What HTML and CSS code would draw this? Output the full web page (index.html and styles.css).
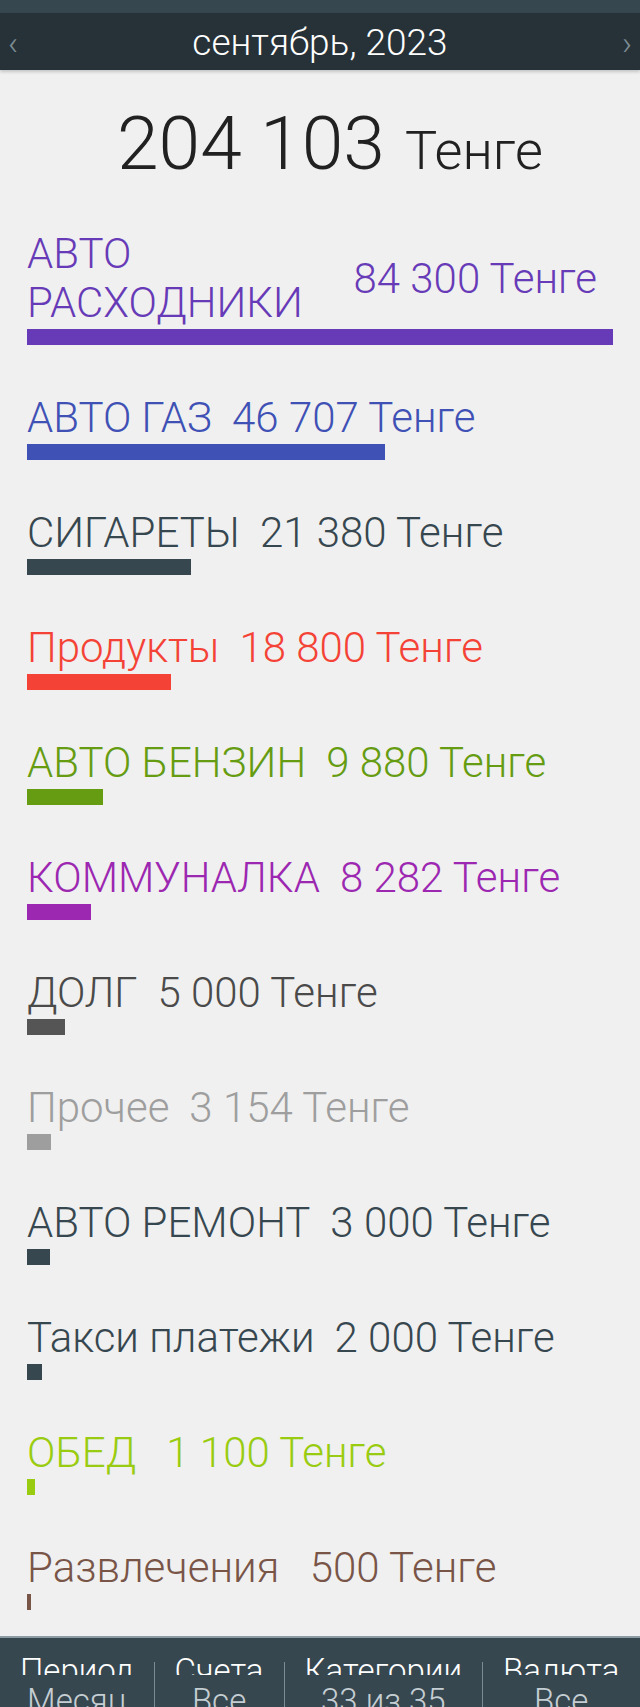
FILE: index.html
```html
<!DOCTYPE html>
<html lang="ru">
<head>
<meta charset="utf-8">
<title>Расходы</title>
<link rel="stylesheet" href="styles.css">
</head>
<body>
<div class="app">
  <div class="status"></div>
  <header class="header">
    <span class="arrow">‹</span>
    <span class="title">сентябрь, 2023</span>
    <span class="arrow">›</span>
  </header>
  <main class="main">
    <div class="total"><span class="total-num">204 103</span><span class="total-cur">Тенге</span></div>
    <div class="list">
      <div class="row c-purple">
        <div class="row-text"><span class="label">АВТО РАСХОДНИКИ</span><span class="value">84 300 Тенге</span></div>
        <div class="bar" style="width:586px"></div>
      </div>
      <div class="row c-indigo">
        <div class="row-text"><span class="label">АВТО ГАЗ</span><span class="value">46 707 Тенге</span></div>
        <div class="bar" style="width:358px"></div>
      </div>
      <div class="row c-slate">
        <div class="row-text"><span class="label">СИГАРЕТЫ</span><span class="value">21 380 Тенге</span></div>
        <div class="bar" style="width:164px"></div>
      </div>
      <div class="row c-red">
        <div class="row-text"><span class="label">Продукты</span><span class="value">18 800 Тенге</span></div>
        <div class="bar" style="width:144px"></div>
      </div>
      <div class="row c-green">
        <div class="row-text"><span class="label">АВТО БЕНЗИН</span><span class="value">9 880 Тенге</span></div>
        <div class="bar" style="width:76px"></div>
      </div>
      <div class="row c-violet">
        <div class="row-text"><span class="label">КОММУНАЛКА</span><span class="value">8 282 Тенге</span></div>
        <div class="bar" style="width:64px"></div>
      </div>
      <div class="row c-dark">
        <div class="row-text"><span class="label">ДОЛГ</span><span class="value">5 000 Тенге</span></div>
        <div class="bar" style="width:38px"></div>
      </div>
      <div class="row c-grey">
        <div class="row-text"><span class="label">Прочее</span><span class="value">3 154 Тенге</span></div>
        <div class="bar" style="width:24px"></div>
      </div>
      <div class="row c-slate">
        <div class="row-text"><span class="label">АВТО РЕМОНТ</span><span class="value">3 000 Тенге</span></div>
        <div class="bar" style="width:23px"></div>
      </div>
      <div class="row c-slate">
        <div class="row-text"><span class="label">Такси платежи</span><span class="value">2 000 Тенге</span></div>
        <div class="bar" style="width:15px"></div>
      </div>
      <div class="row c-lime">
        <div class="row-text"><span class="label">ОБЕД&nbsp;</span><span class="value">1 100 Тенге</span></div>
        <div class="bar" style="width:8px"></div>
      </div>
      <div class="row c-brown">
        <div class="row-text"><span class="label">Развлечения&nbsp;</span><span class="value">500 Тенге</span></div>
        <div class="bar" style="width:4px"></div>
      </div>
    </div>
  </main>
  <nav class="tabs">
    <div class="tab"><div class="tab-title">Период</div><div class="tab-value">Месяц</div></div>
    <div class="divider"></div>
    <div class="tab"><div class="tab-title">Счета</div><div class="tab-value">Все</div></div>
    <div class="divider"></div>
    <div class="tab"><div class="tab-title">Категории</div><div class="tab-value">33 из 35</div></div>
    <div class="divider"></div>
    <div class="tab"><div class="tab-title">Валюта</div><div class="tab-value">Все</div></div>
  </nav>
</div>
</body>
</html>
```
FILE: styles.css
```css
* { box-sizing: border-box; }
html, body {
  margin: 0;
  padding: 0;
  background: #f0f0f0;
}
body {
  font-family: "Roboto Light", Roboto, "Noto Sans", "DejaVu Sans", sans-serif;
  font-weight: 300;
}
.app {
  width: 640px;
  height: 1707px;
  overflow: hidden;
  display: flex;
  flex-direction: column;
}
.status {
  height: 13px;
  flex: none;
  background: #37474f;
}
.header {
  height: 57px;
  flex: none;
  background: #263238;
  display: flex;
  align-items: center;
  justify-content: space-between;
  padding: 3px 6px 0;
  color: #fff;
  box-shadow: 0 2px 3px rgba(0,0,0,0.18);
  position: relative;
  z-index: 1;
}
.title {
  font-size: 37px;
  line-height: 42px;
  font-weight: 300;
}
.arrow {
  font-size: 34px;
  line-height: 40px;
  color: #7d8c93;
  width: 14px;
  text-align: center;
}
.main {
  flex: 1;
  overflow: hidden;
  padding: 29px 27px 0;
}
.total {
  display: flex;
  justify-content: center;
  align-items: baseline;
  gap: 20px;
  color: #212121;
  line-height: 88px;
  height: 88px;
  padding-left: 20px;
  white-space: nowrap;
}
.total-num {
  font-size: 75px;
}
.total-cur {
  font-size: 54px;
}
.list {
  margin-top: 42px;
  display: flex;
  flex-direction: column;
  gap: 48px;
}
.row-text {
  display: flex;
  align-items: center;
  gap: 20px;
  padding-right: 16px;
  font-size: 42px;
  line-height: 49px;
}
.label {
  flex: 0 1 auto;
}
.value {
  flex: none;
  white-space: nowrap;
}
.bar {
  height: 16px;
  margin-top: 2px;
  background: currentColor;
}
.c-purple { color: #673ab7; }
.c-indigo { color: #3f51b5; }
.c-slate { color: #37474f; }
.c-red { color: #f44336; }
.c-green { color: #669c12; }
.c-violet { color: #9c27b0; }
.c-dark { color: #4a4a4a; }
.c-dark .bar { background: #555555; }
.c-grey { color: #9e9e9e; }
.c-lime { color: #99cc11; }
.c-brown { color: #795548; }
.tabs {
  height: 71px;
  flex: none;
  background: #37474f;
  border-top: 2px solid #8d9ca3;
  display: flex;
  overflow: hidden;
}
.tab {
  padding: 0 20px;
  text-align: center;
  display: flex;
  flex-direction: column;
  align-items: center;
  white-space: nowrap;
}
.tab-title {
  flex: none;
  margin-top: 13px;
  height: 24px;
  overflow: hidden;
  font-size: 33px;
  line-height: 40px;
  font-weight: 400;
  color: #ffffff;
}
.tab-value {
  flex: none;
  margin-top: 6px;
  font-size: 33px;
  line-height: 40px;
  font-weight: 300;
  color: #c5ced3;
}
.divider {
  width: 1px;
  flex: none;
  margin-top: 24px;
  background: #7b8c94;
}
```
